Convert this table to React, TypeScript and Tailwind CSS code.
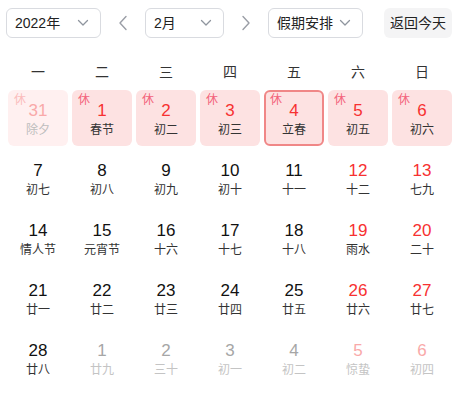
import React from "react";

type Day = {
  n: number;
  l: string;
  rest?: boolean;
  other?: boolean;
  weekend?: boolean;
  sel?: boolean;
};

const rows: Day[][] = [
  [
    { n: 31, l: "除夕", rest: true, other: true },
    { n: 1, l: "春节", rest: true },
    { n: 2, l: "初二", rest: true },
    { n: 3, l: "初三", rest: true },
    { n: 4, l: "立春", rest: true, sel: true },
    { n: 5, l: "初五", rest: true, weekend: true },
    { n: 6, l: "初六", rest: true, weekend: true },
  ],
  [
    { n: 7, l: "初七" },
    { n: 8, l: "初八" },
    { n: 9, l: "初九" },
    { n: 10, l: "初十" },
    { n: 11, l: "十一" },
    { n: 12, l: "十二", weekend: true },
    { n: 13, l: "七九", weekend: true },
  ],
  [
    { n: 14, l: "情人节" },
    { n: 15, l: "元宵节" },
    { n: 16, l: "十六" },
    { n: 17, l: "十七" },
    { n: 18, l: "十八" },
    { n: 19, l: "雨水", weekend: true },
    { n: 20, l: "二十", weekend: true },
  ],
  [
    { n: 21, l: "廿一" },
    { n: 22, l: "廿二" },
    { n: 23, l: "廿三" },
    { n: 24, l: "廿四" },
    { n: 25, l: "廿五" },
    { n: 26, l: "廿六", weekend: true },
    { n: 27, l: "廿七", weekend: true },
  ],
  [
    { n: 28, l: "廿八" },
    { n: 1, l: "廿九", other: true },
    { n: 2, l: "三十", other: true },
    { n: 3, l: "初一", other: true },
    { n: 4, l: "初二", other: true },
    { n: 5, l: "惊蛰", other: true, weekend: true },
    { n: 6, l: "初四", other: true, weekend: true },
  ],
];

const weekdays = ["一", "二", "三", "四", "五", "六", "日"];

function Chevron() {
  return (
    <svg width="12" height="8" viewBox="0 0 12 8" fill="none">
      <path d="M1.5 1.5 L6 6 L10.5 1.5" stroke="#8f959e" strokeWidth="1.3" strokeLinecap="round" strokeLinejoin="round" />
    </svg>
  );
}

function Select({ label, w }: { label: string; w: string }) {
  return (
    <div
      className={`${w} h-[30px] flex items-center justify-between pl-[8px] pr-[11px] border border-[#d9dbe0] rounded-[6px] text-[14px] text-[#222]`}
    >
      <span>{label}</span>
      <Chevron />
    </div>
  );
}

function Arrow({ dir }: { dir: "l" | "r" }) {
  return (
    <div className="w-[44px] h-[30px] flex items-center justify-center">
      <svg width="10" height="16" viewBox="0 0 10 16" fill="none">
        <path
          d={dir === "l" ? "M8 1.5 L2 8 L8 14.5" : "M2 1.5 L8 8 L2 14.5"}
          stroke="#9a9ea6"
          strokeWidth="1.4"
          strokeLinecap="round"
          strokeLinejoin="round"
        />
      </svg>
    </div>
  );
}

function Cell({ d }: { d: Day }) {
  let bg = "";
  if (d.rest) bg = d.other ? "bg-[#fff0f0]" : "bg-[#fde2e2]";
  const border = d.sel ? "border-2 border-[#f08787]" : "";
  let numColor = "text-[#111]";
  let lunColor = "text-[#333]";
  if (d.rest && !d.other) {
    numColor = "text-[#f73131]";
  } else if (d.rest && d.other) {
    numColor = "text-[#f9a9a9]";
    lunColor = "text-[#bdbdbd]";
  } else if (d.other && d.weekend) {
    numColor = "text-[#f9a9a9]";
    lunColor = "text-[#c4c4c4]";
  } else if (d.other) {
    numColor = "text-[#a6a6a6]";
    lunColor = "text-[#c4c4c4]";
  } else if (d.weekend) {
    numColor = "text-[#f73131]";
  }
  const restColor = d.other ? "text-[#fbbcbc]" : "text-[#f3637a]";
  return (
    <div className="w-[64px] h-[60px] p-[2px]">
      <div
        className={`relative w-full h-full rounded-[6px] ${bg} ${border} flex flex-col items-center ${d.sel ? "pt-[9px]" : "pt-[11px]"}`}
      >
        {d.rest && (
          <span
            className={`absolute ${d.sel ? "left-[4px] top-[0px]" : "left-[6px] top-[2px]"} text-[12px] leading-[16px] ${restColor}`}
          >
            休
          </span>
        )}
        <span className={`text-[17px] leading-[20px] ${numColor}`}>{d.n}</span>
        <span className={`text-[12px] leading-[18px] ${lunColor}`}>{d.l}</span>
      </div>
    </div>
  );
}

export default function App() {
  return (
    <div
      className="w-[459px] h-[398px] bg-white overflow-hidden"
      style={{ fontFamily: '"Liberation Sans", Arial, "Noto Sans CJK SC", sans-serif' }}
    >
      <div className="flex items-center pl-[6px] pt-[8px]">
        <Select label="2022年" w="w-[95px]" />
        <Arrow dir="l" />
        <Select label="2月" w="w-[79px]" />
        <Arrow dir="r" />
        <Select label="假期安排" w="w-[95px]" />
        <div className="ml-[21px] w-[68px] h-[30px] rounded-[6px] bg-[#f4f4f5] flex items-center justify-center text-[14px] text-[#222]">
          返回今天
        </div>
      </div>
      <div className="pl-[6px] mt-[18px]">
        <div className="flex h-[32px] items-center">
          {weekdays.map((w) => (
            <div key={w} className="w-[64px] text-center text-[14px] text-[#333]">
              {w}
            </div>
          ))}
        </div>
        {rows.map((r, i) => (
          <div key={i} className="flex">
            {r.map((d, j) => (
              <Cell key={j} d={d} />
            ))}
          </div>
        ))}
      </div>
    </div>
  );
}
